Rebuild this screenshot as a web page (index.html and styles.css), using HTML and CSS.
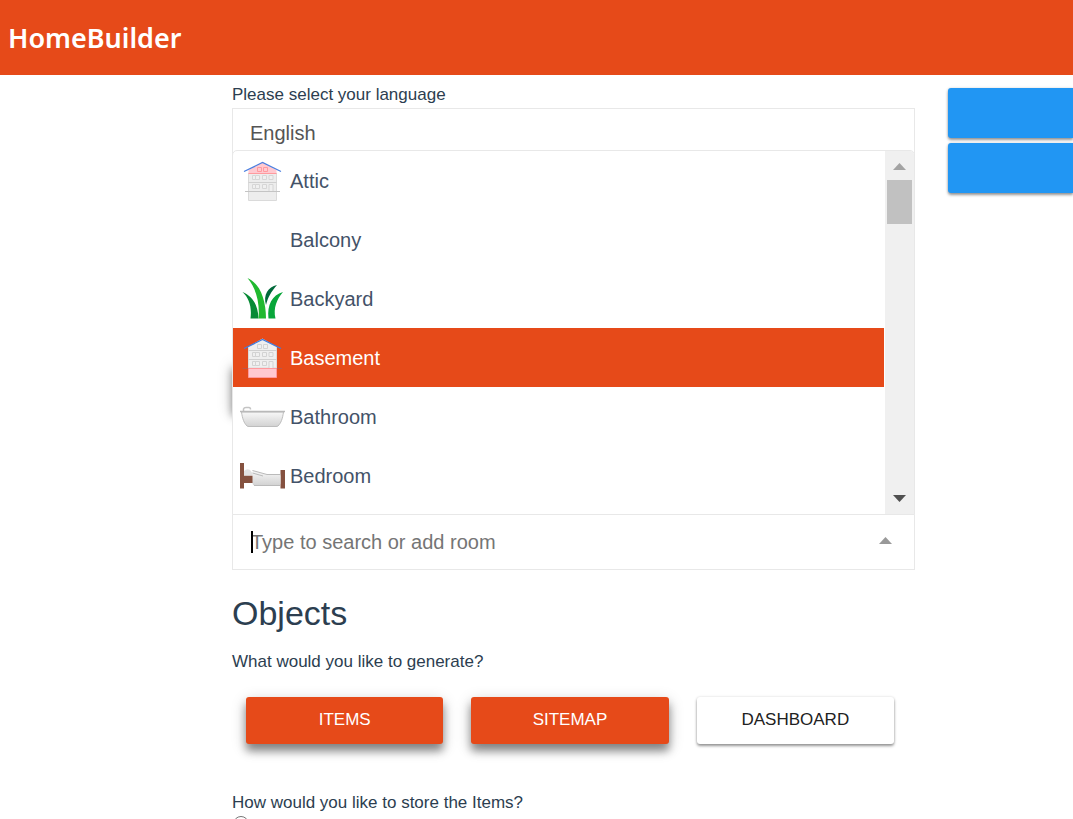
FILE: index.html
```html
<!DOCTYPE html>
<html lang="en">
<head>
  <meta charset="UTF-8" />
  <meta name="viewport" content="width=device-width, initial-scale=1" />
  <title>HomeBuilder</title>
  <link rel="stylesheet" href="styles.css">
</head>
<body>
  <header class="header">
    <h1>HomeBuilder</h1>
  </header>

  <div class="layout">
    <main class="content">
      <label class="label" for="language">Please select your language</label>
      <select class="language" id="language">
        <option>English</option>
      </select>

      <div class="floors"></div>

      <div class="multiselect">
        <div class="dropdown">
          <ul class="options">
            <li class="option">
              <svg class="icon" viewBox="0 0 45 45">
                <path d="M8.5 15H36.5V42.5H8.5Z" fill="#ededed" stroke="#dadada" />
                <path d="M8.5 24.5H36.5" stroke="#d0d0d0" />
                <path d="M8.5 12L22.5 4L36.5 12V15.5H8.5Z" fill="#ffc9d0" />
                <path d="M8.5 15.5H36.5M17.5 9.5h4v4h-4zM23.5 9.5h4v4h-4z" fill="none" stroke="#ff9a9e" />
                <path d="M12.5 17.5h3v4h-3zM15.5 17.5h4v4h-4zM22.5 17.5h4v4h-4zM29 17.5h4v4h-4zM12.5 26.5h3v4h-3zM15.5 26.5h4v4h-4zM22.5 26.5h4v4h-4zM29 26.5h4v7h-4z" fill="#f0f0f0" stroke="#d6d6d6" />
                <path d="M5 33.5H40" stroke="#c4c4c4" />
                <path d="M4 13.5L22.5 4.5L41 13.5" fill="none" stroke="#4a7fe0" stroke-width="1.3" />
              </svg>
              <span class="name">Attic</span>
            </li>
            <li class="option">
              <span class="icon"></span>
              <span class="name">Balcony</span>
            </li>
            <li class="option">
              <svg class="icon" viewBox="0 0 45 45">
                <path d="M37 9C28 11 23 19 26 29C28 21 31 16 37 9Z" fill="#00693a" />
                <path d="M2.5 16C12 20 18 28 18.5 42.5H10.5C12 31 9 22 2.500 16Z" fill="#078a35" />
                <path d="M43 16C32 19 27 29 28.5 42.5H35.5C33 32 37 23 43 16Z" fill="#08a63a" />
                <path d="M7.5 2C19 7 26 22 26 42.5H18.5C20 27 16 12 7.5 2Z" fill="#20b92f" />
              </svg>
              <span class="name">Backyard</span>
            </li>
            <li class="option option-active">
              <svg class="icon" viewBox="0 0 45 45">
                <path d="M8.5 12L22.5 4L36.5 12V33H8.5Z" fill="#efefef" stroke="#dadada" />
                <path d="M8.5 15.5H36.5M8.5 24.5H36.5" stroke="#d0d0d0" />
                <path d="M17.5 9.5h4v4h-4zM23.5 9.5h4v4h-4zM12.5 17.5h3v4h-3zM15.5 17.5h4v4h-4zM22.5 17.5h4v4h-4zM29 17.5h4v4h-4zM12.5 26.5h3v4h-3zM15.5 26.5h4v4h-4zM22.5 26.5h4v4h-4zM29 26.5h4v7h-4z" fill="#f0f0f0" stroke="#d3d3d3" />
                <path d="M2.5 33.5H42" stroke="#b9574a" />
                <path d="M8.5 33.5H36.5V42.5H8.5Z" fill="#ffc9d0" stroke="#ff9a9e" />
                <path d="M4 13.5L22.5 4.5L41 13.5" fill="none" stroke="#3f7ce0" stroke-width="1.3" />
              </svg>
              <span class="name">Basement</span>
            </li>
            <li class="option">
              <svg class="icon" viewBox="0 0 45 45">
                <defs>
                  <linearGradient id="steel" x1="0" y1="0" x2="0" y2="1">
                    <stop offset="0" stop-color="#f8f8f8" />
                    <stop offset="1" stop-color="#d2d2d2" />
                  </linearGradient>
                </defs>
                <path d="M3.5 17.5V15Q4 13.5 6 13.5H9Q10.5 13.5 10.5 15.5" fill="none" stroke="#c4c4c4" stroke-width="1.5" />
                <path d="M1.5 18H43.5C42.5 25 41 29 38 32Q37.5 32.5 36 32.5H9Q7.5 32.5 7 32C4 29 2.5 25 1.5 18Z" fill="url(#steel)" stroke="#bdbdbd" />
                <path d="M0 17.5H45" stroke="#b9b9b9" stroke-width="1.5" />
              </svg>
              <span class="name">Bathroom</span>
            </li>
            <li class="option">
              <svg class="icon" viewBox="0 0 45 45">
                <path d="M0 10H4V22.500H13V30H4V35.5H0ZM40.5 17H45V35.5H40.5Z" fill="#85513f" />
                <path d="M4 22.5V18Q7 15 10 17L13 21V22.5Z" fill="#e2e2e2" />
                <path d="M12.5 17.5L27 21.5H39Q40.5 21.5 40.5 23V30.5Q40.5 32.5 38 32.5H15Q12.5 32.5 12.5 30V22.5Z" fill="url(#steel)" />
                <path d="M12.5 17.5L27 21.5H40.5M12.5 20L23 23" fill="none" stroke="#bababa" />
                <path d="M14 32.5H40" stroke="#bababa" />
              </svg>
              <span class="name">Bedroom</span>
            </li>
          </ul>
          <div class="scrollbar">
            <svg class="arrow" viewBox="0 0 13 7"><path d="M0 7L6.5 0L13 7Z" fill="#a3a3a3" /></svg>
            <div class="thumb"></div>
            <svg class="arrow arrow-down" viewBox="0 0 13 7"><path d="M0 0L6.5 7L13 0Z" fill="#505050" /></svg>
          </div>
        </div>
        <div class="search">
          <input type="text" id="room" placeholder="Type to search or add room" />
          <svg class="arrow" viewBox="0 0 13 7"><path d="M0 7L6.5 0L13 7Z" fill="#999" /></svg>
        </div>
      </div>

      <h2>Objects</h2>
      <p class="label">What would you like to generate?</p>
      <div class="buttons">
        <button class="btn btn-selected" type="button">ITEMS</button>
        <button class="btn btn-selected" type="button">SITEMAP</button>
        <button class="btn" type="button">DASHBOARD</button>
      </div>

      <label class="label" for="storage">How would you like to store the Items?</label>
      <input class="radio" type="radio" id="storage" />
    </main>

    <aside class="side">
      <button class="side-btn" type="button"></button>
      <button class="side-btn" type="button"></button>
    </aside>
  </div>
</body>
</html>
```
FILE: styles.css
```css
* {
  box-sizing: border-box;
}

body {
  margin: 0;
  height: 100vh;
  overflow: hidden;
  font-family: "Liberation Sans", Arial, sans-serif;
  font-size: 17px;
  color: #2c3e50;
  background-color: #fff;
}

.header {
  display: flex;
  align-items: center;
  height: 75px;
  padding: 0 8px;
  background-color: #e64a19;
  color: #fff;
}

.header h1 {
  margin: 0;
  font-family: "Noto Sans", "Open Sans", sans-serif;
  font-size: 27px;
  font-weight: 600;
}

.layout {
  display: grid;
  grid-template-columns: minmax(0, 1fr) 125px;
  gap: 33px;
  padding-left: 232px;
}

.content {
  display: flex;
  flex-direction: column;
  padding-top: 10px;
}

.label {
  margin: 0;
  line-height: 20px;
}

.language {
  appearance: none;
  height: 50px;
  margin-top: 3px;
  padding: 0 17px;
  border: 1px solid #e8e8e8;
  border-radius: 0;
  background-color: #fff;
  color: #555;
  font-family: inherit;
  font-size: 20px;
}

.floors {
  height: 47px;
  margin: 204px 21px 105px 0;
  box-shadow: 0 7px 8px rgba(0, 0, 0, 0.4), 0 4px 16px rgba(0, 0, 0, 0.2);
}

.multiselect {
  position: relative;
  border: 1px solid #e8e8e8;
}

/* the list opens upwards over the fields above */
.dropdown {
  position: absolute;
  bottom: 100%;
  left: -1px;
  right: -1px;
  display: flex;
  height: 365px;
  overflow: hidden;
  border: 1px solid #e8e8e8;
  border-radius: 5px 5px 0 0;
  background-color: #fff;
}

.options {
  flex: 1;
  margin: 0;
  padding: 0;
  list-style: none;
}

.option {
  display: flex;
  align-items: center;
  gap: 5px;
  height: 59px;
  padding: 0 7px;
  color: #435268;
  font-size: 20px;
}

.option-active {
  margin-right: 1px;
  background-color: #e64a19;
  color: #fff;
}

.icon {
  width: 45px;
  height: 45px;
}

.name {
  padding-top: 2px;
}

.scrollbar {
  display: flex;
  flex-direction: column;
  align-items: center;
  width: 29px;
  padding: 12px 0;
  background-color: #f0f0f0;
}

.thumb {
  width: 25px;
  height: 44px;
  margin-top: 10px;
  background-color: #c1c1c1;
}

.arrow {
  width: 13px;
  height: 7px;
}

.arrow-down {
  margin-top: auto;
}

.search {
  position: relative;
  display: flex;
  align-items: center;
  height: 54px;
  padding: 0 22px 0 18px;
}

/* text cursor */
.search::before {
  content: "";
  position: absolute;
  left: 18px;
  width: 2px;
  height: 22px;
  background-color: #000;
}

.search input {
  flex: 1;
  padding: 0;
  border: none;
  outline: none;
  background: none;
  font-family: inherit;
  font-size: 20px;
}

.search input::placeholder {
  color: #757575;
}

.search .arrow {
  margin-bottom: 4px;
}

h2 {
  margin: 23px 0 19px;
  font-size: 34px;
  font-weight: normal;
  line-height: 40px;
}

.buttons {
  display: grid;
  grid-template-columns: repeat(3, 1fr);
  gap: 28px;
  margin: 25px 21px 49px 14px;
}

.btn {
  height: 47px;
  padding: 0 0 2px;
  border: none;
  border-radius: 3px;
  background-color: #fff;
  color: #212121;
  font-family: inherit;
  font-size: 17px;
  cursor: pointer;
  box-shadow: 0 2px 3px rgba(0, 0, 0, 0.4), 0 0 3px rgba(0, 0, 0, 0.12);
}

.btn-selected {
  background-color: #e64a19;
  color: #fff;
  box-shadow: 0 7px 8px rgba(0, 0, 0, 0.4), 0 4px 16px rgba(0, 0, 0, 0.2);
}

.radio {
  width: 16px;
  height: 16px;
  margin: 3px 1px;
}

.side {
  display: flex;
  flex-direction: column;
  gap: 5px;
  padding-top: 13px;
}

.side-btn {
  height: 50px;
  border: none;
  border-radius: 3px 0 0 3px;
  background-color: #2196f3;
  cursor: pointer;
  box-shadow: 0 2px 3px rgba(0, 0, 0, 0.4), 0 0 3px rgba(0, 0, 0, 0.12);
}
```
